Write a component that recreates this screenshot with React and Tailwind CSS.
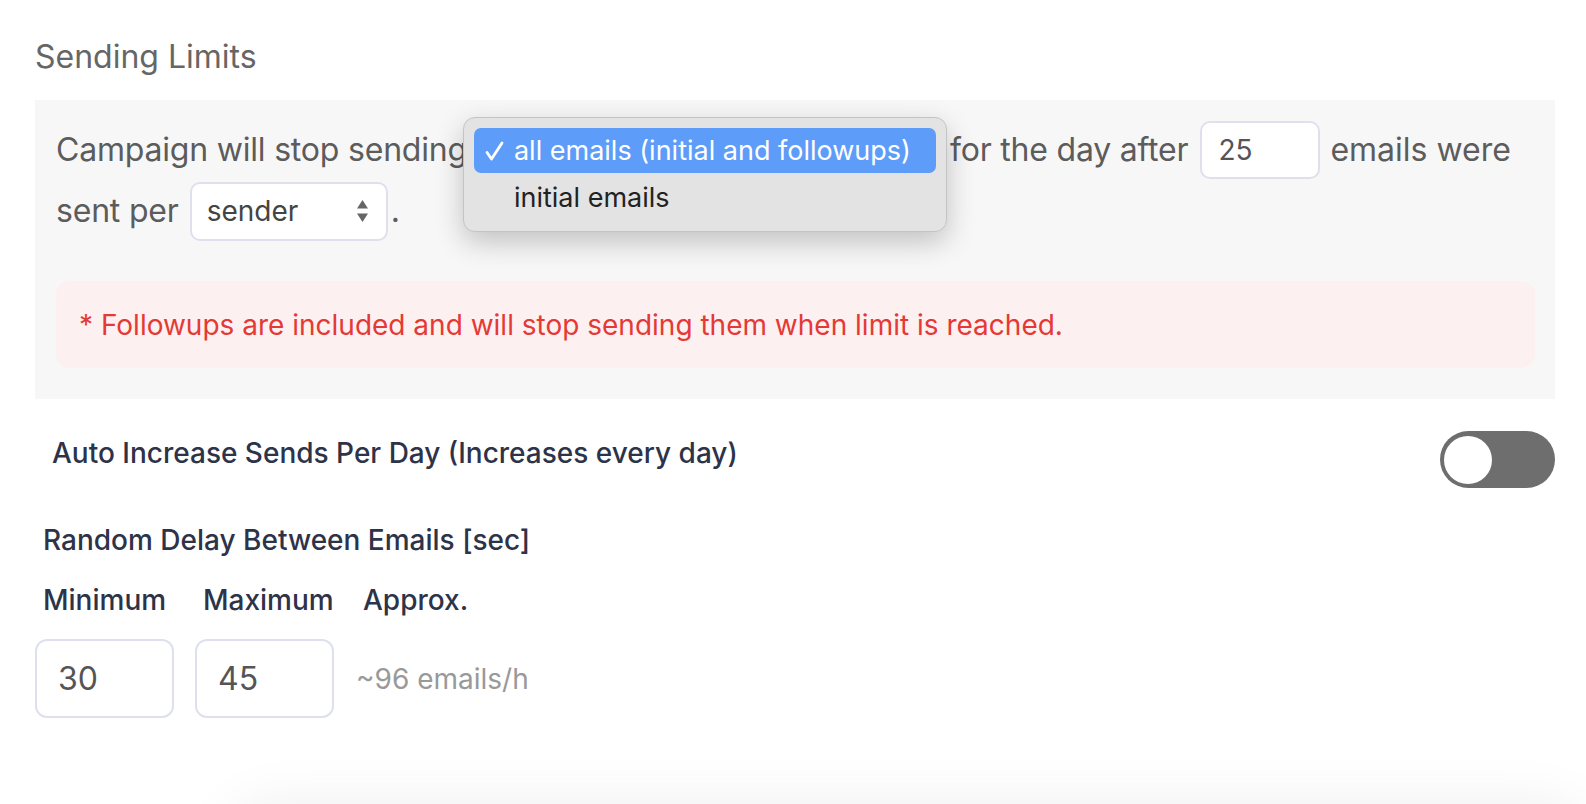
import React from 'react';

// Select arrows (up / down triangles)
const UpDown = () => (
  <svg width="13" height="24" viewBox="0 0 13 24" className="shrink-0">
    <path d="M6.5 1 L12 9.5 L1 9.5 Z" fill="#666" />
    <path d="M6.5 23 L12 14.5 L1 14.5 Z" fill="#666" />
  </svg>
);

const Check = () => (
  <svg width="19" height="20" viewBox="0 0 19 20" className="shrink-0">
    <path d="M2 11.5 L6.5 18 L17 2" fill="none" stroke="#fff" strokeWidth="2.8" strokeLinecap="round" strokeLinejoin="round" />
  </svg>
);

const NumberBox = ({ value, className = '' }) => (
  <div className={`flex items-center bg-white border-2 border-[#dfe0ee] ${className}`}>
    {value}
  </div>
);

export default function App() {
  return (
    <div className="min-h-screen bg-white font-['Inter','Noto_Sans',sans-serif] overflow-hidden">
      <div className="pl-[35px] pr-[31px]">
        <h2 className="pt-[41px] text-[32px] leading-none text-[#666]">Sending Limits</h2>

        {/* sending limit box */}
        <div className="mt-[27px] bg-[#f7f7f7] pt-[20px] pb-[31px] pl-[21px] pr-[20px] text-[32px] text-[#5c5c5c]">
          <div className="flex items-center h-[60px] leading-[40px]">
            <span className="tracking-[-0.2px]">Campaign will stop sending</span>
            <span className="relative ml-[-4px] w-[482px] h-[58px] shrink-0">
              {/* open select menu */}
              <div className="absolute left-0 top-[-4px] w-[484px] h-[115px] rounded-[12px] bg-[#e3e3e3] border border-[#c4c4c4] shadow-[0_10px_28px_rgba(0,0,0,0.22)] px-[10px] pt-[10px] text-[27px] leading-none z-10">
                <div className="flex items-center h-[45px] rounded-[7px] bg-[#5d9cf8] text-white pl-[11px] gap-[10px]">
                  <Check />
                  <span>all emails (initial and followups)</span>
                </div>
                <div className="flex items-center h-[45px] pt-[4px] pl-[40px] text-[#222]">initial emails</div>
              </div>
            </span>
            <span className="ml-[5px] tracking-[-0.2px]">for the day after</span>
            <NumberBox value="25" className="ml-[12px] w-[120px] h-[58px] rounded-[10px] pl-[16px] text-[28px] text-[#555]" />
            <span className="ml-[10px]">emails were</span>
          </div>
          <div className="flex items-center h-[60px] mt-[1px] leading-[40px]">
            <span className="tracking-[-0.2px]">sent per</span>
            <div className="ml-[11px] flex items-center justify-between w-[198px] h-[59px] rounded-[10px] bg-white border-2 border-[#dfe0ee] pl-[15px] pr-[17px] text-[28px] text-[#444]">
              <span>sender</span>
              <UpDown />
            </div>
            <span className="ml-[3px]">.</span>
          </div>

          <div className="mt-[40px] h-[87px] rounded-[14px] bg-[#fdf0f0] pl-[23px] flex items-center text-[28px] text-[#e53935]">
            * Followups are included and will stop sending them when limit is reached.
          </div>
        </div>

        {/* auto increase */}
        <div className="mt-[32px] flex items-center justify-between h-[57px] pl-[17px]">
          <span className="mb-[14px] text-[28px] font-medium text-[#2d3348]">Auto Increase Sends Per Day (Increases every day)</span>
          <div className="w-[115px] h-[57px] rounded-full bg-[#6e6e6e] flex items-center pl-[4px]">
            <div className="w-[48px] h-[48px] rounded-full bg-white" />
          </div>
        </div>

        {/* random delay */}
        <div className="mt-[38px] pl-[8px] text-[28px] leading-none font-medium text-[#2d3348]">Random Delay Between Emails [sec]</div>
        <div className="mt-[32px] grid grid-cols-[139px_139px_auto] gap-x-[21px] text-[28px] leading-none font-medium text-[#2d3348]">
          <span className="pl-[8px]">Minimum</span>
          <span className="pl-[8px]">Maximum</span>
          <span className="pl-[8px]">Approx.</span>
        </div>
        <div className="mt-[25px] grid grid-cols-[139px_139px_auto] gap-x-[21px] items-center">
          <NumberBox value="30" className="h-[79px] rounded-[12px] pl-[21px] text-[32px] text-[#555]" />
          <NumberBox value="45" className="h-[79px] rounded-[12px] pl-[21px] text-[32px] text-[#555]" />
          <span className="pl-[1px] text-[28px] text-[#999]">~96 emails/h</span>
        </div>
      </div>

      {/* floating card below the fold, only its shadow shows */}
      <div className="mt-[100px] ml-[230px] h-[80px] rounded-[40px] bg-white shadow-[0_-10px_60px_rgba(0,0,0,0.08)]" />
    </div>
  );
}
